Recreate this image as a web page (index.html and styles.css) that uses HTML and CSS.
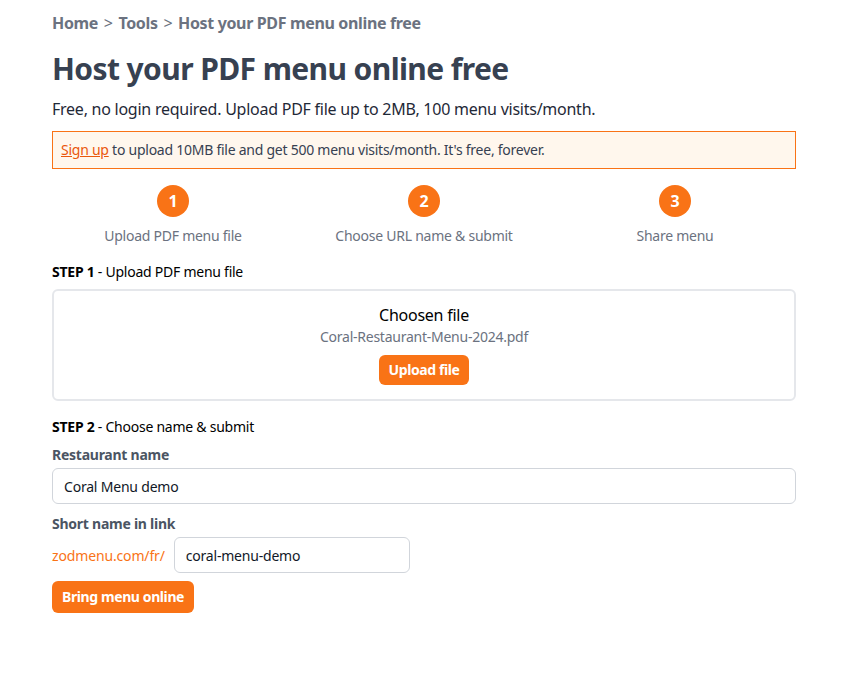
FILE: index.html
```html
<!DOCTYPE html>
<html lang="en">
<head>
    <meta charset="UTF-8">
    <meta name="viewport" content="width=device-width, initial-scale=1.0">
    <title>Host your PDF menu online free</title>
    <link rel="stylesheet" href="styles.css">
</head>
<body>
    <div class="container">
        <nav class="breadcrumb">
            <a href="#">Home</a> <span class="sep">&gt;</span>
            <a href="#">Tools</a> <span class="sep">&gt;</span>
            <span>Host your PDF menu online free</span>
        </nav>

        <h1>Host your PDF menu online free</h1>
        <p class="lead">Free, no login required. Upload PDF file up to 2MB, 100 menu visits/month.</p>

        <div class="notice">
            <a href="#">Sign up</a> to upload 10MB file and get 500 menu visits/month. It's free, forever.
        </div>

        <div class="steps">
            <div class="step">
                <div class="num">1</div>
                <div class="step-label">Upload PDF menu file</div>
            </div>
            <div class="step">
                <div class="num">2</div>
                <div class="step-label">Choose URL name &amp; submit</div>
            </div>
            <div class="step">
                <div class="num">3</div>
                <div class="step-label">Share menu</div>
            </div>
        </div>

        <div class="step-title"><strong>STEP 1</strong> - Upload PDF menu file</div>
        <div class="upload-box">
            <div class="chosen">Choosen file</div>
            <div class="filename">Coral-Restaurant-Menu-2024.pdf</div>
            <button class="btn">Upload file</button>
        </div>

        <div class="step-title"><strong>STEP 2</strong> - Choose name &amp; submit</div>
        <form>
            <label class="label" for="rname">Restaurant name</label>
            <input class="input" id="rname" type="text" value="Coral Menu demo">

            <label class="label" for="slug">Short name in link</label>
            <div class="slug-row">
                <span class="prefix">zodmenu.com/fr/</span>
                <input class="input slug" id="slug" type="text" value="coral-menu-demo">
            </div>

            <button class="btn btn-big" type="button">Bring menu online</button>
        </form>
    </div>
</body>
</html>
```

FILE: styles.css
```css
body {
    margin: 0;
    padding-left: 2px;
    font-family: "Noto Sans", "Open Sans", sans-serif;
    letter-spacing: -0.25px;
    color: #111827;
    background: white;
}
.container {
    max-width: 744px;
    margin: 0 auto;
    padding: 10px 0 40px;
}
.breadcrumb {
    font-size: 16px;
    font-weight: bold;
    color: #6b7280;
    line-height: 26px;
    letter-spacing: -0.35px;
}
.breadcrumb a {
    color: #6b7280;
    text-decoration: none;
}
.breadcrumb .sep {
    font-weight: normal;
    margin: 0 2px;
}
h1 {
    margin: 13px 0 0;
    font-size: 30px;
    line-height: 40px;
    letter-spacing: -0.6px;
    color: #374151;
}
.lead {
    margin: 8px 0 10px;
    font-size: 16px;
    line-height: 24px;
    color: #1f2937;
}
.notice {
    border: 1px solid #f97316;
    background: #fff7ed;
    padding: 9px 8px;
    font-size: 14px;
    line-height: 18px;
    color: #374151;
}
.notice a {
    color: #ea580c;
}
.steps {
    display: grid;
    grid-template-columns: 1fr 1fr 1fr;
    gap: 9px;
    margin-top: 16px;
}
.step {
    display: flex;
    flex-direction: column;
    align-items: center;
}
.num {
    width: 32px;
    height: 32px;
    border-radius: 50%;
    background: #f97316;
    color: white;
    font-weight: bold;
    font-size: 16px;
    line-height: 32px;
    text-align: center;
}
.step-label {
    margin-top: 9px;
    font-size: 14px;
    line-height: 20px;
    color: #6b7280;
}
.step-title {
    margin-top: 16px;
    font-size: 14px;
    line-height: 20px;
    color: #000;
}
.upload-box {
    margin: 7px 0 1px;
    border: 2px solid #e5e7eb;
    border-radius: 6px;
    padding: 12px 0 14px;
    text-align: center;
}
.chosen {
    font-size: 16px;
    line-height: 24px;
    color: #000;
}
.filename {
    font-size: 14px;
    line-height: 20px;
    color: #6b7280;
}
.btn {
    display: inline-block;
    border: none;
    border-radius: 6px;
    background: #f97316;
    color: white;
    font-family: inherit;
    font-weight: bold;
    font-size: 14px;
    line-height: 20px;
    letter-spacing: -0.4px;
    padding: 5px 10px;
    margin-top: 8px;
}
.btn-big {
    padding: 6px 10px;
}
.label {
    display: block;
    margin-top: 10px;
    font-size: 14px;
    line-height: 20px;
    font-weight: bold;
    color: #4b5563;
}
.label:first-child {
    margin-top: 8px;
}
.input {
    display: block;
    box-sizing: border-box;
    width: 100%;
    height: 36px;
    margin-top: 3px;
    border: 1px solid #d1d5db;
    border-radius: 6px;
    padding: 0 11px;
    font-family: inherit;
    font-size: 14px;
    letter-spacing: -0.2px;
    color: #111827;
}
.slug-row {
    display: flex;
    align-items: center;
    gap: 9px;
    margin-top: 3px;
}
.prefix {
    font-size: 14px;
    letter-spacing: -0.15px;
    color: #f97316;
}
.input.slug {
    width: 236px;
    margin-top: 0;
}
```
